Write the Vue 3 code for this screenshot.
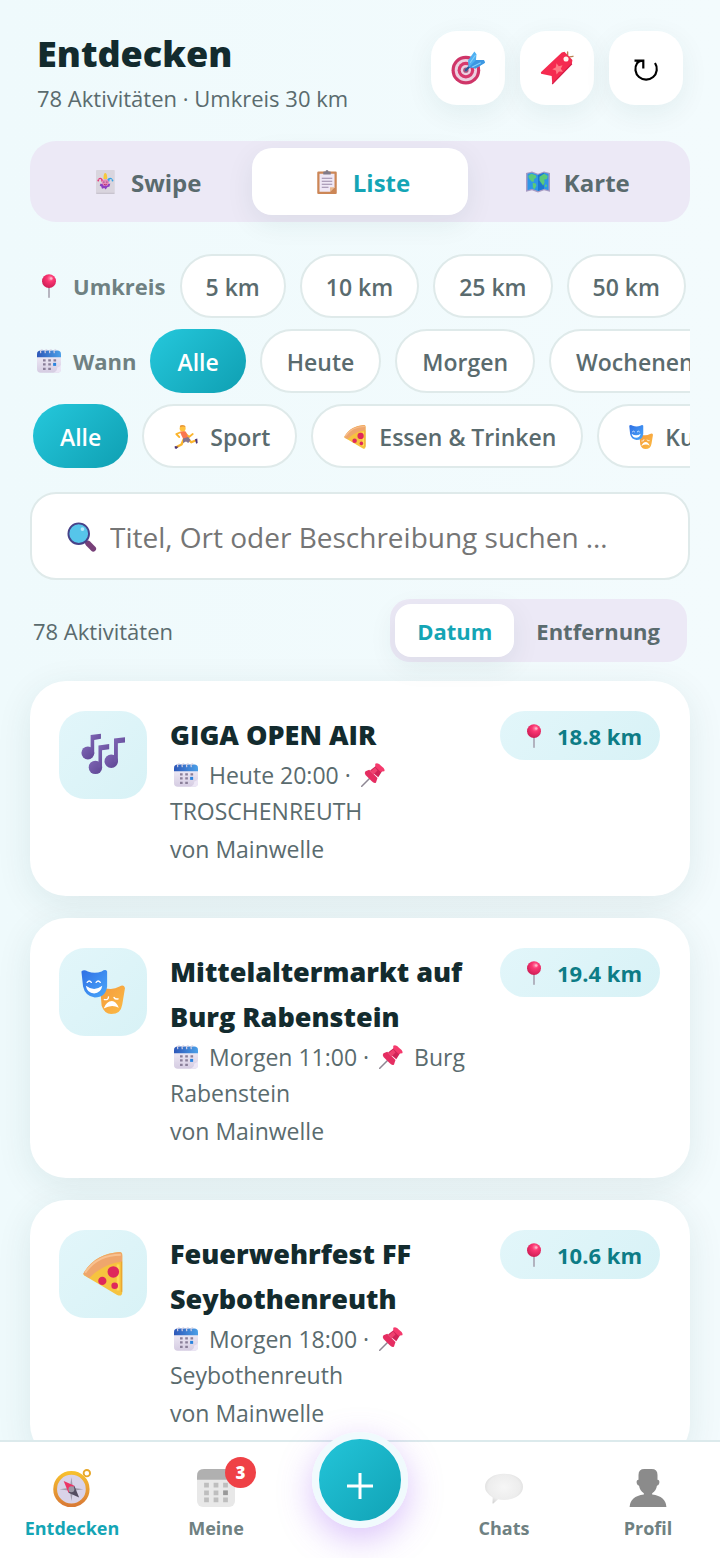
<template>
    <svg class="sprite" aria-hidden="true">
        <defs>
            <linearGradient id="gBlue" x1="0" y1="0" x2="1" y2="1">
                <stop offset="0" stop-color="#2f6fe4" />
                <stop offset="1" stop-color="#4aa8fb" />
            </linearGradient>
            <linearGradient id="gOrange" x1="0" y1="0" x2="1" y2="1">
                <stop offset="0" stop-color="#f59a3c" />
                <stop offset="1" stop-color="#fbbb45" />
            </linearGradient>
            <linearGradient id="gPurple" x1="0" y1="0" x2="1" y2="1">
                <stop offset="0" stop-color="#7f66b4" />
                <stop offset="1" stop-color="#5d4593" />
            </linearGradient>
            <linearGradient id="gGold" x1="0" y1="0" x2="0" y2="1">
                <stop offset="0" stop-color="#f7bf2e" />
                <stop offset="1" stop-color="#d97b36" />
            </linearGradient>
            <linearGradient id="gPaper" x1="0" y1="0" x2="0" y2="1">
                <stop offset="0" stop-color="#f6f3fb" />
                <stop offset="1" stop-color="#d5cce2" />
            </linearGradient>
            <linearGradient id="gCalTop" x1="0" y1="0" x2="1" y2="0">
                <stop offset="0" stop-color="#2d57b8" />
                <stop offset="1" stop-color="#4ba0e8" />
            </linearGradient>
            <radialGradient id="gBall" cx=".6" cy=".3" r=".8">
                <stop offset="0" stop-color="#ff8fae" />
                <stop offset=".3" stop-color="#fb3672" />
                <stop offset="1" stop-color="#c4184f" />
            </radialGradient>
            <radialGradient id="gBubble" cx=".5" cy=".45" r=".6">
                <stop offset="0" stop-color="#f6f6f6" />
                <stop offset=".7" stop-color="#ededed" />
                <stop offset="1" stop-color="#d4d4d4" />
            </radialGradient>
        </defs>

        <symbol id="target" viewBox="0 0 32 32">
            <circle cx="14" cy="18" r="13.5" fill="#cf3568" />
            <circle cx="14" cy="18" r="10.500" fill="#ecd0e0" />
            <circle cx="14" cy="18" r="7.800" fill="#d8386c" />
            <circle cx="14" cy="18" r="4.800" fill="#ecd0e0" />
            <circle cx="14" cy="18" r="2.500" fill="#a8557f" />
            <path d="M14 18 20 12" stroke="#285b98" stroke-width="2" stroke-linecap="round" />
            <path d="M16 9 22 0.5 24 3 23.5 8.5 31 8.5 32 11 23 16.5 16.500 15Z" fill="#4fb0f2" />
            <path d="M17 15 23.500 8.500 31 8.500 32 11 23 16.500Z" fill="#3d97e2" />
            <path d="M18 11 23 4M20 15 28 11" stroke="#86d0fa" stroke-width="1" />
        </symbol>

        <symbol id="bookmark" viewBox="0 0 32 32">
            <path d="m25 6 6-1M26 5V1" stroke="#b78251" stroke-width="1.300" stroke-linecap="round" />
            <path d="M20.500 1.500 23 .8 30.500 8.500 30 12 13 29.500 11.500 31 11 23.500 1 21.500 0.800 20Z" fill="#f52b50" />
            <path d="m30 12-17 17.500-1.500 1.500" stroke="#d61c48" stroke-width="1.200" fill="none" />
            <circle cx="24.500" cy="7.500" r="2.400" fill="#fff3ed" />
            <path d="m15.500 11.500 2.200 2.800 3.500-.8-1.600 3.100 2 2.900-3.700-.3-2.300 2.900-.7-3.700-3.400-1.300 3.300-1.600Z" fill="#ff7b86" />
        </symbol>

        <symbol id="refresh" viewBox="0 0 32 32">
            <path d="M25 11a10.700 10.700 0 1 1-17.800 0C8.600 9 10.500 8.700 13.300 8.700M4.500 8.700h8.800v7.800" fill="none" stroke="#000" stroke-width="2.200" />
        </symbol>

        <symbol id="joker" viewBox="0 0 32 32">
            <rect x="4" y="0" width="25" height="32" rx="1" fill="#d9d5de" />
            <path d="M4.500 31h24" stroke="#bbb5c3" />
            <path d="M14 12C14 6 15 4 16.500 4S19 7 19 12Z" fill="#f5c83b" />
            <path d="M14 15C12 9 8 9 6.500 13l4-1 1 4Z" fill="#e6397a" />
            <path d="M18 15c2-6 7-6 8.500-2l-4-1-1 4Z" fill="#35a3e5" />
            <circle cx="7" cy="14" r="1.200" fill="#e6397a" />
            <circle cx="26" cy="14" r="1.200" fill="#35a3e5" />
            <circle cx="16.500" cy="17" r="4.800" fill="#e68abb" />
            <path d="m10 18 3 1 1 2h5l1-2 3-1-1 4-3 1-2 3-2-2-3 1-1-3-2-1Z" fill="#8d3fc2" />
            <circle cx="14.500" cy="16" r=".8" fill="#573073" />
            <circle cx="18.500" cy="16" r=".8" fill="#573073" />
            <path d="M14.500 19q2 1.500 4 0" stroke="#a71952" fill="none" />
        </symbol>

        <symbol id="clipboard" viewBox="0 0 32 32">
            <rect x="3" y="2" width="26" height="30" rx="1.500" fill="#cc8656" />
            <path d="M6 5h20v18l-6 6H6Z" fill="#efe8f6" />
            <path d="M20 29v-6h6Z" fill="#e9b88d" />
            <path d="M11 6V3q0-1 1-1h2q0-2 2-2t2 2h2q1 0 1 1v3Z" fill="#827b88" />
            <path d="M9 11h14M9 15h14M9 19h14M9 23h9" stroke="#8e7d9e" stroke-width="1.200" />
        </symbol>

        <symbol id="map" viewBox="0 0 32 32">
            <path d="M0 4 8 2l8 3 8-3 8 2v25l-8-2-8 3-8-3-8 2Z" fill="#a79ac3" />
            <path d="M2 5l6-1.500 8 3 8-3L30 5v22l-6-2-8 3-8-3-6 2Z" fill="#2d96e8" />
            <path d="M16 6.500 24 3.500V25l-8 3Z" fill="#1e76d0" />
            <path d="m3 8 4-3 6 2 1 3-3 2-1 4-3-1-3-4Zm6 9 4 1 1 3-3 5-2-3ZM18 9l6-4 5 3-1 4-4 1 1 3-2 5-3-4-2-3Zm8 10 2 1-1 3-2-1Z" fill="#5bc979" />
        </symbol>

        <symbol id="pin" viewBox="0 0 32 32">
            <path d="M16 16v15" stroke="#9b93a3" stroke-width="1.800" stroke-linecap="round" />
            <circle cx="16" cy="9.500" r="9.300" fill="url(#gBall)" />
            <circle cx="19" cy="6" r="1.700" fill="#ffb4c7" />
        </symbol>

        <symbol id="calendar" viewBox="0 0 32 32">
            <rect x="0" y="2" width="32" height="29.500" rx="5" fill="url(#gPaper)" />
            <path d="M0 11V7q0-5 5-5h22q5 0 5 5v4Z" fill="url(#gCalTop)" />
            <path d="M32 21v6q0 4.500-5 4.500h-5q5-2 5-7 3 0 5-3.500" fill="#ede7f6" />
            <path d="M5 5q-1-4 2-4M11 5q-1-4 2-4M17 5q-1-4 2-4M23 5q-1-4 2-4" stroke="#d6d1e4" stroke-width="1.600" fill="none" stroke-linecap="round" />
            <path d="M8 15h3.500M15 15h3.500M22 15h3.500M8 20.500h3.500M15 20.500h3.500M8 26.500h3.500M15 26.500h3.500" stroke="#8a7f99" stroke-width="3" />
            <path d="M21.500 20.500h4" stroke="#2a83de" stroke-width="4" />
        </symbol>

        <symbol id="runner" viewBox="0 0 32 32">
            <path d="M8 10 3 12l4 4M16 12l4 4 5-4" stroke="#fbb52e" stroke-width="2.400" fill="none" stroke-linecap="round" stroke-linejoin="round" />
            <path d="M13 19 10 26l-6 3M19 19l4 4 5-2" stroke="#fbb52e" stroke-width="3.200" fill="none" stroke-linecap="round" stroke-linejoin="round" />
            <path d="M8 9q5-2 8 0l3 8-6 3-3-6Z" fill="#fa7750" />
            <path d="m12 18 7-2 3 4-3 4-3-2-4 2Z" fill="#84758f" />
            <circle cx="11.500" cy="4.500" r="4" fill="#ffc23e" />
            <path d="M8 3q-1-3 3-3 4 0 4.500 3L12 2Z" fill="#e8983a" />
            <path d="m1 28 5 1-3 3-2-1ZM28 19l3-1 .5 6-2 1Z" fill="#4b3478" />
        </symbol>

        <symbol id="pizza" viewBox="0 0 32 32">
            <path d="M2 15.500C8 5 17 1 28 0q2 0 2 2v27q0 4-4 2L4 18q-3-1-2-2.500Z" fill="#f6c33f" />
            <path d="M2 15C8 5 17 1 28 0q2 0 2 3v4Q18 8 8 17l-2 2-3-2q-2-1-1-2Z" fill="#efa66c" />
            <path d="M3 15C9 6 18 2 29 2" stroke="#f8c18f" stroke-width="1.600" fill="none" />
            <path d="M27 9v19" stroke="#ffd957" stroke-width="2" />
            <circle cx="23.500" cy="14.500" r="4.200" fill="#df285c" />
            <circle cx="15.500" cy="21" r="3" fill="#df285c" />
            <circle cx="24.500" cy="24.500" r="2.400" fill="#df285c" />
            <path d="M29.500 7v22" stroke="#eaa733" />
        </symbol>

        <symbol id="masks" viewBox="0 0 32 32">
            <path d="M14 14q1-3 3-1 6 2 11-1 3-2 4 1l-2 12q-1 7-8 7-5 0-7-6Z" fill="url(#gOrange)" />
            <path d="M.3 1Q2-.8 5 1q5 2 10 0 3-2 4 0v11q-1 8-9 8Q3 19 1.500 12Z" fill="url(#gBlue)" />
            <path d="M4.500 9q1.500-2 3 0M11 9q1.500-2 3 0" stroke="#fff" stroke-width="1" fill="none" stroke-linecap="round" />
            <path d="M3.500 11.500q6 4.500 12 0-1 5.500-6 5.500t-6-5.500Z" fill="#fff" />
            <path d="M17 21.500q3 .5 3-2M24 20q1 1.500 3 1" stroke="#fff" fill="none" stroke-linecap="round" />
            <path d="M16.500 28q2-5.500 6-5.500 3 0 5 5-5-3-11 .5Z" fill="#fff" />
        </symbol>

        <symbol id="lens" viewBox="0 0 32 32">
            <path d="m18 19 5 5" stroke="#76577d" stroke-width="3" />
            <path d="m22.500 23 5.500 5.500" stroke="#774078" stroke-width="6" stroke-linecap="round" />
            <circle cx="12.500" cy="12.500" r="11" fill="#56c5ea" stroke="#474289" stroke-width="2" />
            <circle cx="16.500" cy="7.500" r="2" fill="#b4e9fa" />
        </symbol>

        <symbol id="notes" viewBox="0 0 32 32">
            <g fill="url(#gPurple)">
                <circle cx="5" cy="14.500" r="4.700" />
                <circle cx="10.500" cy="25" r="4.900" />
                <circle cx="22" cy="20.500" r="4.900" />
                <path d="M7 1.500 14.500.5v3.700L9.600 5v10H7Z" />
                <path d="M12.700 9 20.500 8v3.800l-5.200.7V25h-2.600Z" />
                <path d="M24 4 32 3v3.900l-5.200.6V21H24Z" />
            </g>
        </symbol>

        <symbol id="pushpin" viewBox="0 0 32 32">
            <path d="M1 31 13 19" stroke="#8d8793" stroke-width="2" stroke-linecap="round" />
            <path d="m21 3 7 8-5 8-11-9Z" fill="#d02457" />
            <path d="M19 1q4-2 8 3 6 4 4 7l-5 .5L19 5Z" fill="#f53a6d" />
            <path d="m11 9 11 11-2 6q-2 2-6-2L6 16q-2-3 0-5Z" fill="#e52d61" />
            <path d="m13 11 6-5 3 4-5 5Z" fill="#ef416f" />
        </symbol>

        <symbol id="compass" viewBox="0 0 32 32">
            <circle cx="28.500" cy="3.500" r="2.700" fill="none" stroke="#e7a729" stroke-width="1.600" />
            <circle cx="15.500" cy="17" r="13.700" fill="#d9d3e8" stroke="url(#gGold)" stroke-width="3.200" />
            <path d="m15.500 7 1.300 8.700 8.700 1.300-8.700 1.300-1.300 8.700-1.300-8.700L5.500 17l8.700-1.300Z" fill="#a29cac" />
            <path d="m9 10 9 4-5 6Z" fill="#ec3566" />
            <path d="m18 14 4 10-9-4Z" fill="#544c61" />
            <circle cx="15.500" cy="17" r="2.500" fill="#9d98a7" />
        </symbol>

        <symbol id="calendarGrey" viewBox="0 0 32 32">
            <rect width="32" height="32" rx="5" fill="#e8e8e8" />
            <path d="M0 9V6q0-6 6-6h20q6 0 6 6v3Z" fill="#b0b0b0" />
            <path d="M6 13.500h4M14 13.500h4M22 13.500h4M6 20h4M14 20h4M6 26h4M14 26h4M22 26h4" stroke="#bebebe" stroke-width="4" />
            <path d="M22 20h4" stroke="#999" stroke-width="4" />
        </symbol>

        <symbol id="bubble" viewBox="0 0 32 32">
            <path d="M16 4c9 0 16 4.500 16 11s-7 11-16 11q-3 0-5-.5L7 29q-.7.500-.7-.5L6.500 24Q0 20 0 15C0 8.500 7 4 16 4Z" fill="url(#gBubble)" />
        </symbol>

        <symbol id="person" viewBox="0 0 32 32">
            <path d="M8 5q0-5 5-5h6q5 0 5 5v4q2 0 1.500 3-.5 2-2 2-.5 4-4 6.500v1Q31 23 31.500 32h-31Q1 23 12.500 21.500v-1Q9 18 8.500 14q-1.500 0-2-2Q6 9 8 9Z" fill="#8b8b8b" />
        </symbol>
    </svg>

    <div class="app">
        <main class="content">
            <header class="header">
                <div class="headline">
                    <h1>Entdecken</h1>
                    <p>78 Aktivitäten · Umkreis 30 km</p>
                </div>
                <button v-for="action in actions" :key="action.icon" class="iconButton" :aria-label="action.label">
                    <svg :class="['actionIcon', { thin: action.icon === 'refresh' }]"><use :href="`#${action.icon}`" /></svg>
                </button>
            </header>

            <div class="tabs">
                <button v-for="tab in tabs" :key="tab.label"
                        :class="{ active: view === tab.label }"
                        @click="view = tab.label">
                    <svg class="emoji"><use :href="`#${tab.icon}`" /></svg>
                    {{ tab.label }}
                </button>
            </div>

            <div class="filters">
                <div class="chipRow distances">
                    <span class="rowLabel"><svg class="emoji"><use href="#pin" /></svg>Umkreis</span>
                    <button v-for="km in distances" :key="km" class="chip"
                            :class="{ active: distance === km }"
                            @click="distance = km">{{ km }} km</button>
                </div>
                <div class="chipRow">
                    <span class="rowLabel"><svg class="emoji"><use href="#calendar" /></svg>Wann</span>
                    <button v-for="day in days" :key="day" class="chip"
                            :class="{ active: when === day }"
                            @click="when = day">{{ day }}</button>
                </div>
                <div class="chipRow categories">
                    <button v-for="cat in categories" :key="cat.label" class="chip"
                            :class="{ active: category === cat.label }"
                            @click="category = cat.label">
                        <svg v-if="cat.icon" class="emoji"><use :href="`#${cat.icon}`" /></svg>
                        {{ cat.label }}
                    </button>
                </div>
            </div>

            <label class="search" for="search">
                <svg class="searchIcon"><use href="#lens" /></svg>
                <input id="search" v-model="query" type="text" aria-label="Suche" placeholder="Titel, Ort oder Beschreibung suchen …" />
            </label>

            <div class="listBar">
                <span class="count">78 Aktivitäten</span>
                <div class="sort">
                    <button v-for="key in ['Datum', 'Entfernung']" :key="key"
                            :class="{ active: sortBy === key }"
                            @click="sortBy = key">{{ key }}</button>
                </div>
            </div>

            <article v-for="item in activities" :key="item.title" class="card">
                <div class="cardIcon"><svg><use :href="`#${item.icon}`" /></svg></div>
                <div class="cardText">
                    <h2>{{ item.title }}</h2>
                    <p>
                        <svg class="emoji"><use href="#calendar" /></svg>{{ item.time }} ·
                        <svg class="emoji pushpin"><use href="#pushpin" /></svg> {{ item.place }}
                    </p>
                    <p class="host">von {{ item.host }}</p>
                </div>
                <span class="badge"><svg class="emoji"><use href="#pin" /></svg>{{ item.km }} km</span>
            </article>
        </main>

        <nav class="bottomNav">
            <a href="#" class="current">
                <svg class="navIcon"><use href="#compass" /></svg>
                Entdecken
            </a>
            <a href="#">
                <span class="navIconWrap">
                    <svg class="navIcon"><use href="#calendarGrey" /></svg>
                    <span class="counter">3</span>
                </span>
                Meine
            </a>
            <div class="fabSlot">
                <button class="fab" aria-label="Neue Aktivität">
                    <svg viewBox="0 0 32 32"><path d="M3 16h26M16 3v26" stroke="#fff" stroke-width="3" /></svg>
                </button>
            </div>
            <a href="#">
                <svg class="navIcon"><use href="#bubble" /></svg>
                Chats
            </a>
            <a href="#">
                <svg class="navIcon"><use href="#person" /></svg>
                Profil
            </a>
        </nav>
    </div>
</template>

<script setup>
    import { ref } from 'vue';

    const view = ref('Liste')
    const distance = ref(null) // null = radius from the profile
    const when = ref('Alle')
    const category = ref('Alle')
    const sortBy = ref('Datum')
    const query = ref('')

    const actions = [
        { icon: 'target', label: 'Standort' },
        { icon: 'bookmark', label: 'Gemerkt' },
        { icon: 'refresh', label: 'Neu laden' }
    ]

    const tabs = [
        { icon: 'joker', label: 'Swipe' },
        { icon: 'clipboard', label: 'Liste' },
        { icon: 'map', label: 'Karte' }
    ]

    const distances = [5, 10, 25, 50]
    const days = ['Alle', 'Heute', 'Morgen', 'Wochenende']

    const categories = [
        { label: 'Alle' },
        { icon: 'runner', label: 'Sport' },
        { icon: 'pizza', label: 'Essen & Trinken' },
        { icon: 'masks', label: 'Kultur' }
    ]

    const activities = [
        { icon: 'notes', title: 'GIGA OPEN AIR', time: 'Heute 20:00', place: 'TROSCHENREUTH', host: 'Mainwelle', km: '18.8' },
        { icon: 'masks', title: 'Mittelaltermarkt auf Burg Rabenstein', time: 'Morgen 11:00', place: 'Burg Rabenstein', host: 'Mainwelle', km: '19.4' },
        { icon: 'pizza', title: 'Feuerwehrfest FF Seybothenreuth', time: 'Morgen 18:00', place: 'Seybothenreuth', host: 'Mainwelle', km: '10.6' }
    ]
</script>

<style>
    body {
        margin: 0;
        background-color: #f0fafc;
    }
</style>

<style scoped>
    .sprite {
        position: absolute;
        width: 0;
        height: 0;
    }

    .app {
        height: 100vh;

        display: flex;
        flex-direction: column;

        font-family: 'Open Sans', 'Noto Sans', sans-serif;
        font-size: 23px;
        color: #5a6b6e;
        background: linear-gradient(90deg, #effafc, #f3fbfd);
    }

    h1,
    h2,
    p {
        margin: 0;
    }

    button,
    input {
        border: 0;
        font-family: inherit;
        color: inherit;
    }

    button {
        padding: 0;
        background: none;
        cursor: pointer;
    }

    .content {
        flex: 1;
        min-height: 0;
        padding: 0 30px;

        overflow-y: auto;
        scrollbar-width: none;
    }

    .emoji {
        flex: none;
        width: 24px;
        height: 24px;
    }

    .header {
        padding: 31px 7px 0 7px;

        display: flex;
        align-items: flex-start;
        gap: 15px;
    }

    .headline {
        flex: 1;
    }

    h1 {
        font-size: 36px;
        font-weight: 800;
        line-height: 46px;
        color: #132b2e;
    }

    .headline p {
        font-size: 22px;
        line-height: 42px;
    }

    .iconButton {
        width: 74px;
        height: 74px;

        display: flex;
        justify-content: center;
        align-items: center;

        border-radius: 26px;
        background-color: #fff;
        box-shadow: 0 8px 28px rgba(20, 70, 70, .07);
    }

    .actionIcon {
        width: 34px;
        height: 34px;
    }

    .actionIcon.thin {
        width: 32px;
        height: 32px;
    }

    .tabs {
        margin-top: 22px;
        padding: 7px;

        display: grid;
        grid-template-columns: repeat(3, 1fr);

        border-radius: 26px;
        background-color: #ece9f6;
    }

    .tabs button {
        height: 67px;
        padding: 1px 0 0 5px;

        display: flex;
        justify-content: center;
        align-items: center;
        gap: 14px;

        border-radius: 20px;
        font-size: 24px;
        font-weight: 700;
    }

    .tabs .active,
    .sort .active {
        color: #14a5b5;
        background-color: #fff;
        box-shadow: 0 8px 28px rgba(20, 70, 70, .08);
    }

    .filters {
        padding-top: 32px;

        display: flex;
        flex-direction: column;
        gap: 11px;
    }

    .chipRow {
        padding-left: 7px;

        display: flex;
        gap: 14px;

        overflow: hidden;
    }

    .categories {
        padding-left: 3px;
    }

    .rowLabel {
        flex: none;

        display: flex;
        align-items: center;
        gap: 12px;

        font-size: 22px;
        font-weight: 700;
        color: #6f8182;
    }

    .chip {
        flex: none;
        box-sizing: border-box;
        height: 64px;
        padding: 2px 25px 0 25px;

        display: flex;
        align-items: center;
        gap: 12px;

        border: 2px solid #dfeaea;
        border-radius: 32px;
        background-color: #fff;
        font-size: 23px;
        font-weight: 600;
    }

    .distances .chip {
        padding: 2px 24px 0 24px;
    }

    .chip .emoji {
        margin-left: 5px;
    }

    .chip.active {
        padding: 2px 27px 0 27px;
        border: 0;
        color: #fff;
        background: linear-gradient(135deg, #25c8dc, #0f9fb2);
    }

    .search {
        box-sizing: border-box;
        height: 88px;
        margin-top: 24px;
        padding: 2px 35px 0 35px;

        display: flex;
        align-items: center;
        gap: 13px;

        border: 2px solid #dfeaea;
        border-radius: 26px;
        background-color: #fff;
    }

    .searchIcon {
        flex: none;
        width: 30px;
        height: 30px;
    }

    .search input {
        flex: 1;
        min-width: 0;
        padding: 0;

        outline: 0;
        background: none;
        font-size: 28px;
    }

    .search input::placeholder {
        color: #757575;
        opacity: 1;
    }

    .listBar {
        padding: 19px 3px;

        display: flex;
        justify-content: space-between;
        align-items: center;
    }

    .count {
        font-size: 22px;
    }

    .sort {
        padding: 5px;

        display: flex;

        border-radius: 20px;
        background-color: #ece9f6;
    }

    .sort button {
        height: 53px;
        padding: 0 22px;

        border-radius: 16px;
        font-size: 22px;
        font-weight: 700;
    }

    .card {
        margin-bottom: 22px;
        padding: 30px 30px 29px 29px;

        display: flex;
        align-items: flex-start;
        gap: 23px;

        border-radius: 36px;
        background-color: #fff;
        box-shadow: 0 8px 36px rgba(20, 70, 70, .09);
    }

    .cardIcon {
        flex: none;
        width: 88px;
        height: 88px;

        display: flex;
        justify-content: center;
        align-items: center;

        border-radius: 26px;
        background: linear-gradient(135deg, #e2f6fa, #d8f2f6);
    }

    .cardIcon svg {
        width: 44px;
        height: 44px;
    }

    .cardText {
        flex: 1;
        padding-top: 1px;
        line-height: 36px;
    }

    .cardText .emoji {
        margin: 0 11px 0 4px;
        vertical-align: -3px;
    }

    .cardText .pushpin {
        margin-right: 5px;
    }

    h2 {
        font-size: 27px;
        font-weight: 800;
        line-height: 45px;
        color: #132b2e;
    }

    .host {
        margin-top: 2px;
    }

    .badge {
        flex: none;
        height: 49px;
        padding: 0 18px 0 22px;

        display: flex;
        align-items: center;
        gap: 11px;

        border-radius: 25px;
        background: linear-gradient(135deg, #e2f6fa, #d8f2f6);
        font-size: 22px;
        font-weight: 700;
        color: #0d7c86;
    }

    .bottomNav {
        position: relative;
        flex: none;
        height: 116px;

        display: grid;
        grid-template-columns: repeat(5, 1fr);

        border-top: 2px solid #dceaec;
        background-color: #fff;
    }

    .bottomNav a {
        padding-top: 27px;

        display: flex;
        flex-direction: column;
        align-items: center;
        gap: 8px;

        font-size: 18px;
        font-weight: 700;
        line-height: 26px;
        color: #6f8182;
        text-decoration: none;
    }

    .bottomNav .current {
        color: #14a5b5;
    }

    .navIconWrap {
        position: relative;
        height: 38px;
    }

    .navIcon {
        width: 38px;
        height: 38px;
    }

    .counter {
        position: absolute;
        top: -12px;
        right: -21px;
        width: 31px;
        height: 31px;

        border-radius: 50%;
        background-color: #ef4146;
        font-size: 17px;
        font-weight: 800;
        line-height: 31px;
        text-align: center;
        color: #fff;
    }

    .fabSlot {
        display: flex;
        justify-content: center;
        align-items: flex-start;
    }

    .fab {
        box-sizing: border-box;
        width: 96px;
        height: 96px;
        margin-top: -10px;
        padding-top: 12px;

        display: flex;
        justify-content: center;
        align-items: center;

        border: 7px solid #f0fafd;
        border-radius: 50%;
        background: linear-gradient(135deg, #25c8dc, #0f9fb2) border-box;
        box-shadow: 0 11px 34px rgba(150, 80, 240, .35);
    }

    .fab svg {
        width: 32px;
        height: 32px;
    }
</style>
